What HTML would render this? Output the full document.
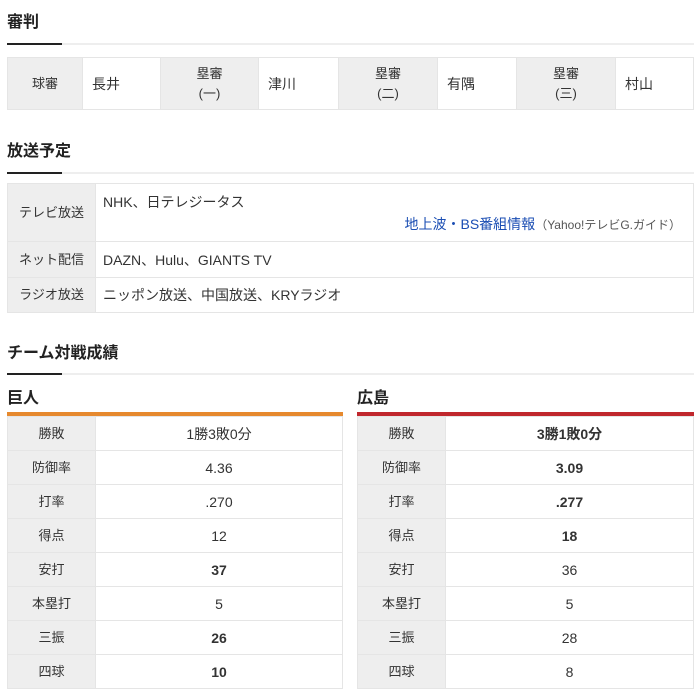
<!DOCTYPE html>
<html><head><style>
body{margin:0;background:#fff;font-family:"Liberation Sans","Noto Sans CJK JP",sans-serif;color:#333;font-size:14px;width:700px;height:696px;overflow:hidden;position:relative}
.h{position:absolute;left:7px;font-weight:bold;font-size:16px;color:#222;line-height:20px}
.ln{position:absolute;left:7px;width:687px;height:2px;background:#eee}
.ln:before{content:"";position:absolute;left:0;top:0;width:55px;height:2px;background:#222}
table{position:absolute;border-collapse:collapse;table-layout:fixed;font-size:14px}
td{border:1px solid #e5e5e5;padding:0;line-height:18px}
.g{background:#eee;text-align:center;font-size:13px;color:#333}
.ump td{height:51px}
.ump td.v{padding-left:9px}
.bc td.v{padding-left:7px}
.tm td{height:33px;text-align:center}
.tm td.g{width:87px}
b{font-weight:bold}
</style></head><body>
<div class="h" style="top:13px">審判</div>
<div class="ln" style="top:43px"></div>
<table class="ump" style="left:7px;top:57px;width:687px">
<tr><td class="g" style="width:74px">球審</td><td class="v" style="width:68px">長井</td><td class="g" style="width:97px;line-height:20px">塁審<br>(一)</td><td class="v" style="width:70px">津川</td><td class="g" style="width:98px;line-height:20px">塁審<br>(二)</td><td class="v" style="width:69px">有隅</td><td class="g" style="width:98px;line-height:20px">塁審<br>(三)</td><td class="v">村山</td></tr>
</table>
<div class="h" style="top:142px">放送予定</div>
<div class="ln" style="top:172px"></div>
<table class="bc" style="left:7px;top:183px;width:687px">
<tr><td class="g" style="width:87px;height:57px">テレビ放送</td><td class="v" style="vertical-align:top">
<div style="margin-top:9px">NHK、日テレジータス</div>
<div style="text-align:right;margin-top:4px;padding-right:12px"><span style="color:#1a4db3">地上波・BS番組情報</span><span style="font-size:12px;color:#555">（Yahoo!テレビG.ガイド）</span></div></td></tr>
<tr><td class="g" style="height:35px">ネット配信</td><td class="v">DAZN、Hulu、GIANTS TV</td></tr>
<tr><td class="g" style="height:34px">ラジオ放送</td><td class="v">ニッポン放送、中国放送、KRYラジオ</td></tr>
</table>
<div class="h" style="top:344px">チーム対戦成績</div>
<div class="ln" style="top:373px"></div>
<div class="h" style="top:389px">巨人</div>
<div class="h" style="top:389px;left:357px">広島</div>
<div style="position:absolute;left:7px;top:412px;width:336px;height:4px;background:#e6892e"></div>
<div style="position:absolute;left:357px;top:412px;width:337px;height:4px;background:#c0272d"></div>
<table class="tm" style="left:7px;top:416px;width:336px">
<tr><td class="g">勝敗</td><td>1勝3敗0分</td></tr>
<tr><td class="g">防御率</td><td>4.36</td></tr>
<tr><td class="g">打率</td><td>.270</td></tr>
<tr><td class="g">得点</td><td>12</td></tr>
<tr><td class="g">安打</td><td><b>37</b></td></tr>
<tr><td class="g">本塁打</td><td>5</td></tr>
<tr><td class="g">三振</td><td><b>26</b></td></tr>
<tr><td class="g">四球</td><td><b>10</b></td></tr>
</table>
<table class="tm" style="left:357px;top:416px;width:337px">
<tr><td class="g">勝敗</td><td><b>3勝1敗0分</b></td></tr>
<tr><td class="g">防御率</td><td><b>3.09</b></td></tr>
<tr><td class="g">打率</td><td><b>.277</b></td></tr>
<tr><td class="g">得点</td><td><b>18</b></td></tr>
<tr><td class="g">安打</td><td>36</td></tr>
<tr><td class="g">本塁打</td><td>5</td></tr>
<tr><td class="g">三振</td><td>28</td></tr>
<tr><td class="g">四球</td><td>8</td></tr>
</table>
</body></html>
